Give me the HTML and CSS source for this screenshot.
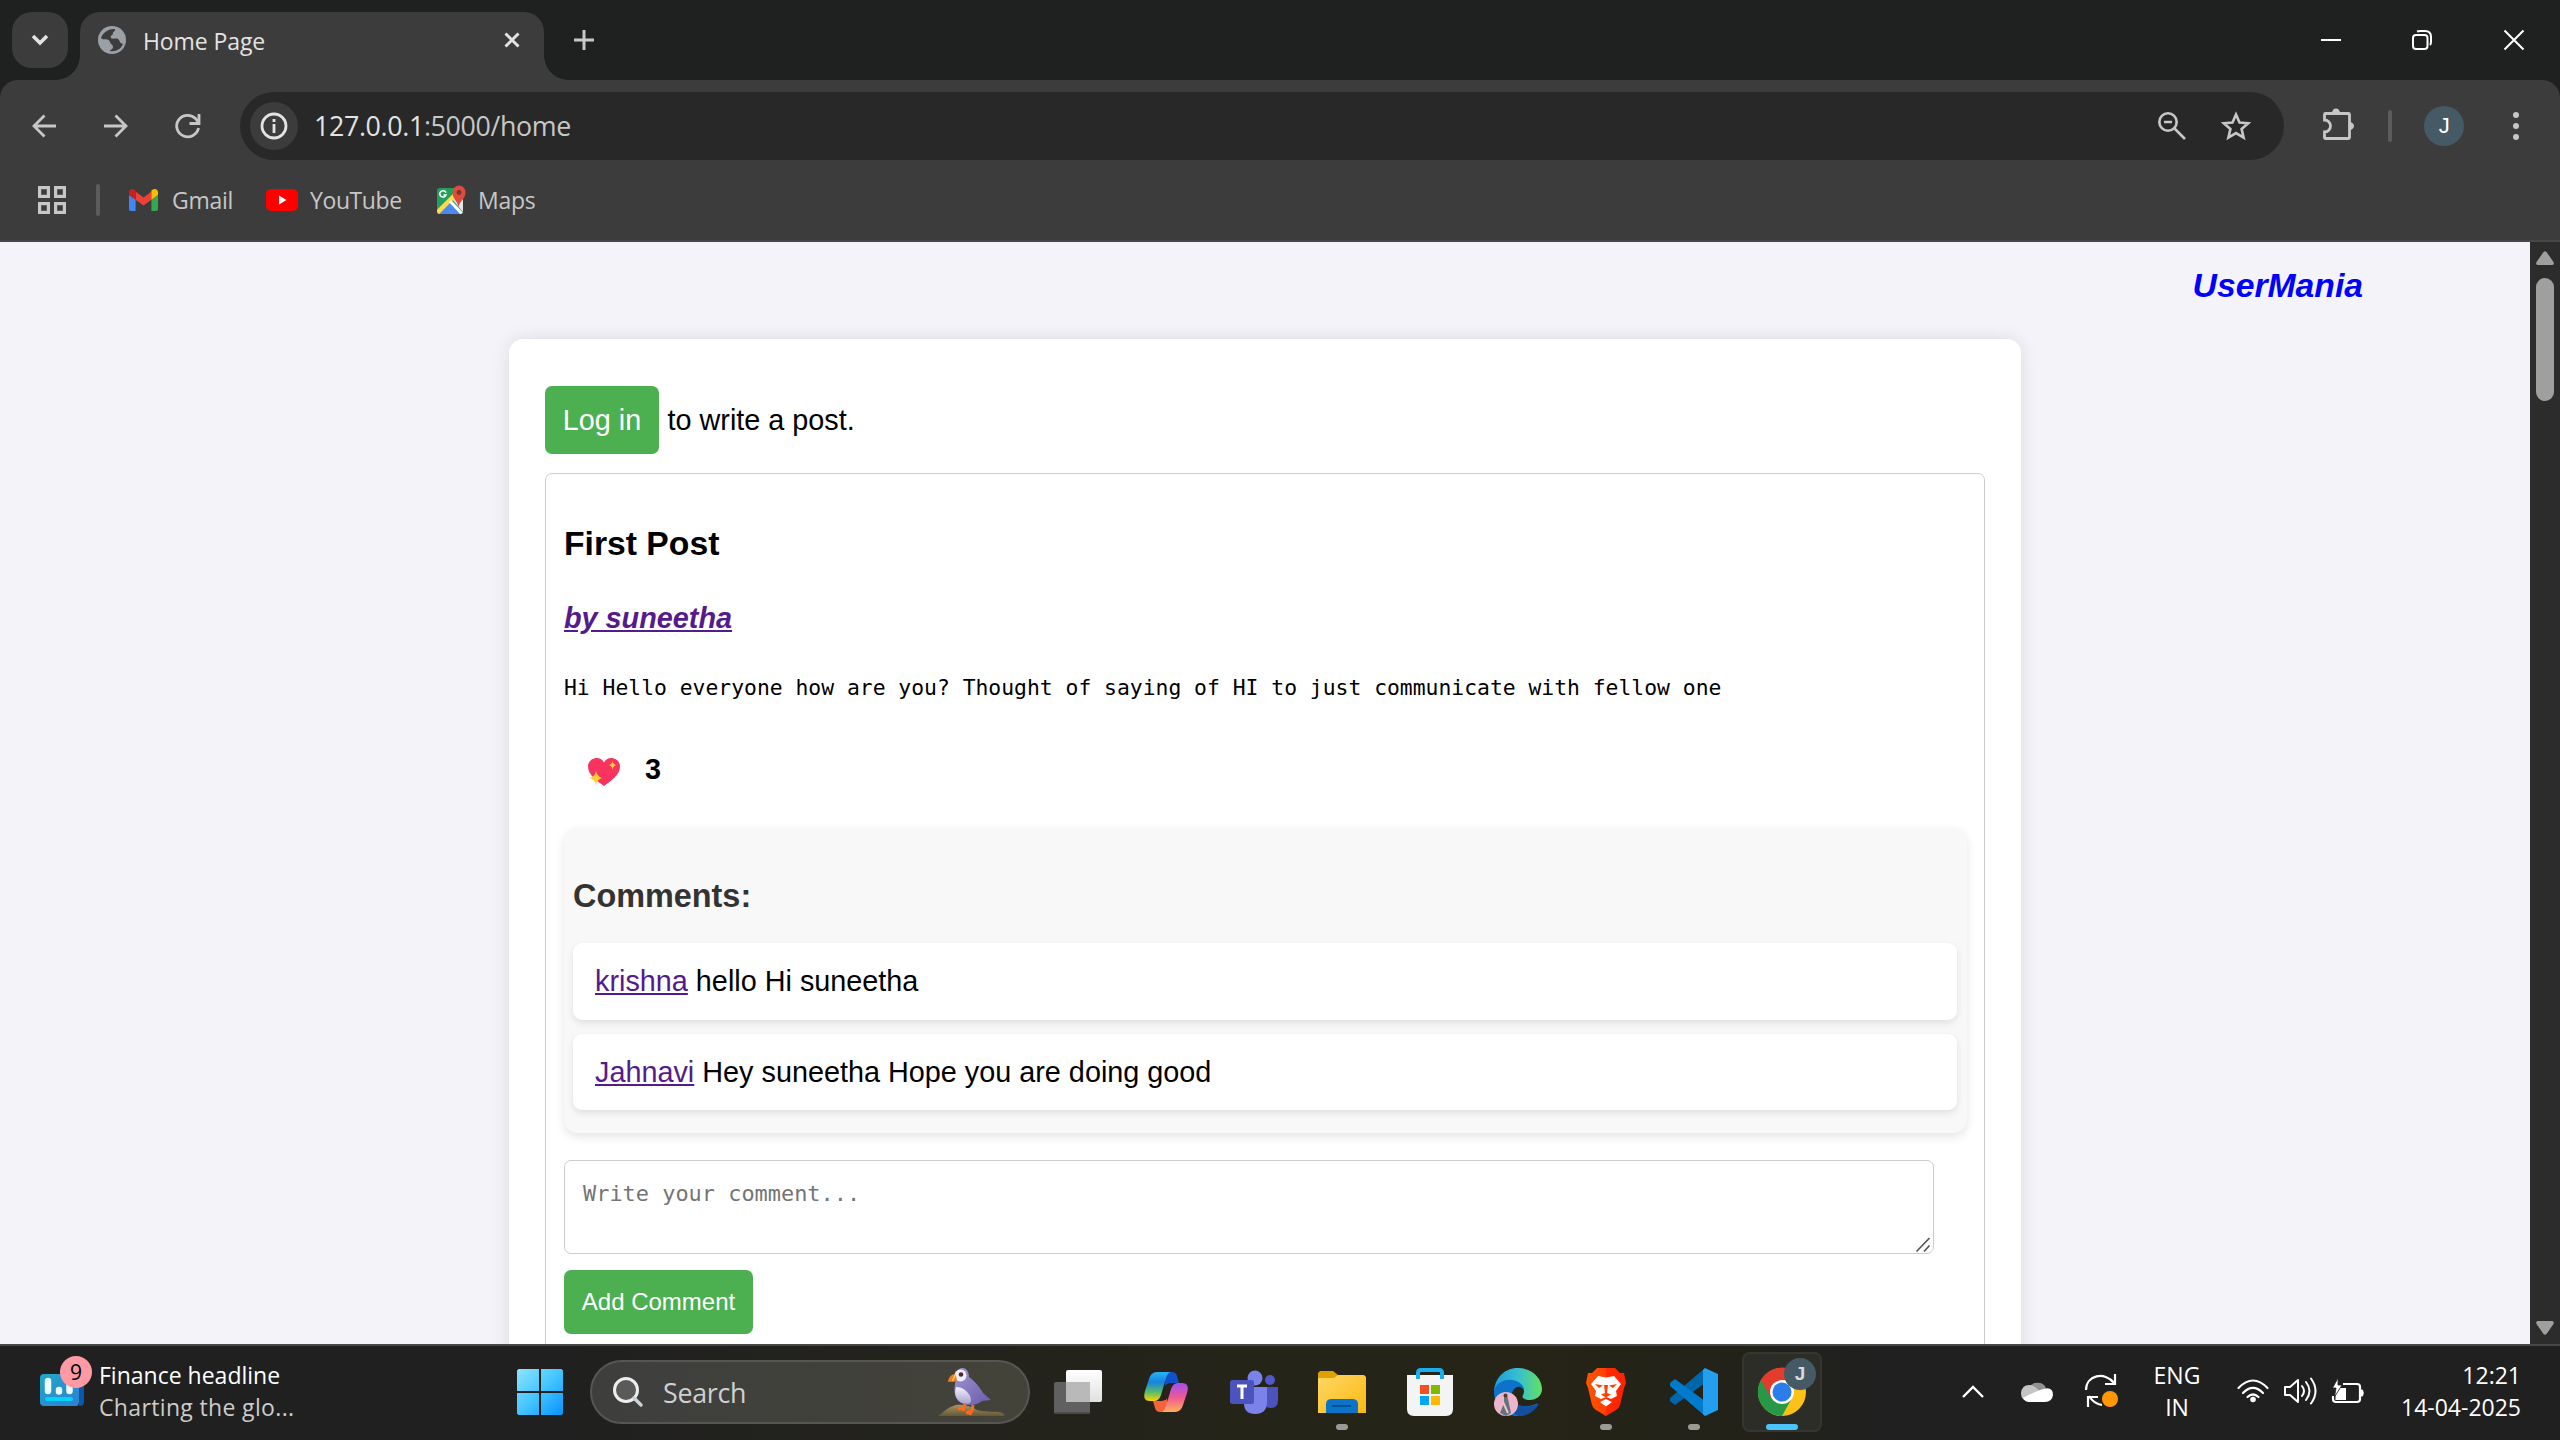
FILE: index.html
```html
<!DOCTYPE html>
<html lang="en">
<head>
<meta charset="utf-8">
<title>Home Page</title>
<link rel="stylesheet" href="styles.css">
</head>
<body>
<div class="screen">
  <header class="tabstrip">
    <button class="tab-search" aria-label="Search tabs"><svg width="20" height="16" viewBox="0 0 20 16"><path d="M3 4l7 7 7-7" fill="none" stroke="#e3e3e3" stroke-width="3.6"/></svg></button>
    <div class="tab">
      <svg class="favicon" width="28" height="28" viewBox="0 0 28 28"><circle cx="14" cy="14" r="14" fill="#9aa0a6"/><path d="M17 3c-6-.5-12 3-14 9 2 3 8-.5 9 4 0 2 3 2 3 5s-3 2-3 4c6 1 11-2 13-7-3-1-3-2-4-4-2-3-6 0-8-2-1-2 1-3 2-4-1-2 3-3 2-5z" fill="#3c3c3c"/></svg>
      <span class="tab-title">Home Page</span>
      <svg class="tab-close" width="16" height="16" viewBox="0 0 16 16"><path d="M1.500 1.500l13 13M14.500 1.500l-13 13" stroke="#e3e3e3" stroke-width="3"/></svg>
    </div>
    <svg class="new-tab" width="20" height="20" viewBox="0 0 20 20"><path d="M10 0v20M0 10h20" stroke="#c7c7c7" stroke-width="3"/></svg>
    <div class="window-controls">
      <svg width="20" height="20" viewBox="0 0 20 20"><path d="M0 10h20" stroke="#fff" stroke-width="2"/></svg>
      <svg width="20" height="20" viewBox="0 0 20 20"><g fill="none" stroke="#fff" stroke-width="2"><rect x="1" y="5" width="14.500" height="14" rx="3"/><path d="M5 1.500Q6 1 8 1h5q6 0 6 6v5q0 2-1 3"/></g></svg>
      <svg width="20" height="20" viewBox="0 0 20 20"><path d="M.5.5l19 19M19.500.5l-19 19" stroke="#fff" stroke-width="2"/></svg>
    </div>
  </header>

  <div class="toolbar">
    <nav class="nav">
      <svg width="24" height="24" viewBox="0 0 24 24"><path d="M24 12H2M12.500 1.500L2 12l10.500 10.500" fill="none" stroke="#c7c7c7" stroke-width="2.800"/></svg>
      <svg width="24" height="24" viewBox="0 0 24 24"><path d="M0 12h22M11.500 1.500L22 12 11.500 22.500" fill="none" stroke="#c7c7c7" stroke-width="2.800"/></svg>
      <svg width="26" height="24" viewBox="0 0 26 24"><path d="M23.500 14A11 10.700 0 1 1 20.500 4.500L23.500 8" fill="none" stroke="#c7c7c7" stroke-width="2.800"/><path d="M24 0v9.500h-9.500" fill="none" stroke="#c7c7c7" stroke-width="2.800"/></svg>
    </nav>
    <div class="omnibox">
      <span class="site-info"><svg width="28" height="28" viewBox="0 0 28 28"><circle cx="14" cy="14" r="12" fill="none" stroke="#e3e3e3" stroke-width="2.800"/><path d="M14 12v9M14 7v3" stroke="#e3e3e3" stroke-width="2.800"/></svg></span>
      <span class="url">127.0.0.1<span class="url-rest">:5000/home</span></span>
      <svg class="zoom-icon" width="28" height="28" viewBox="0 0 28 28"><g fill="none" stroke="#c7c7c7" stroke-width="2.600"><circle cx="10" cy="10" r="8.700"/><path d="M6 10h8M16 16l11 11"/></g></svg>
      <svg class="star" width="32" height="30" viewBox="0 0 32 30"><path d="M16 3.500l3.500 8 8.700.8-6.600 5.700 2 8.600-7.600-4.500-7.600 4.500 2-8.600-6.600-5.700 8.700-.8z" fill="none" stroke="#c7c7c7" stroke-width="2.600"/></svg>
    </div>
    <svg class="extensions" width="32" height="32" viewBox="0 0 32 32"><path d="M3.500 5.500h23q1 0 1 1v23q0 1-1 1h-23q-1 0-1-1v-5.500a6 6 0 0 0 0-12v-5.500q0-1 1-1z" fill="none" stroke="#c7c7c7" stroke-width="2.800"/><path d="M10 5a4 4.500 0 0 1 8 0zM27.500 14a4.500 4 0 0 1 0 8z" fill="#c7c7c7"/></svg>
    <span class="divider"></span>
    <span class="profile">J</span>
    <svg class="menu-dots" width="8" height="28" viewBox="0 0 8 28" fill="#c7c7c7"><circle cx="4" cy="3" r="3"/><circle cx="4" cy="14" r="3"/><circle cx="4" cy="25" r="3"/></svg>
  </div>

  <div class="bookmarks">
    <svg width="28" height="28" viewBox="0 0 28 28"><g fill="none" stroke="#c7c7c7" stroke-width="3.200"><rect x="1.600" y="1.600" width="8.800" height="8.800"/><rect x="17.600" y="1.600" width="8.800" height="8.800"/><rect x="1.600" y="17.600" width="8.800" height="8.800"/><rect x="17.600" y="17.600" width="8.800" height="8.800"/></g></svg>
    <span class="divider bookmarks-divider"></span>
    <svg width="29" height="22" viewBox="0 0 29 22"><path d="M0 6l6.600 4.500V22H2q-2 0-2-2z" fill="#4285f4"/><path d="M29 6l-6.600 4.500V22H27q2 0 2-2z" fill="#34a853"/><path d="M6.600 2.500l7.900 6 7.900-6v8.200l-7.900 5.800-7.900-5.800z" fill="#ea4335"/><path d="M0 6V3.200C0 .2 3.300-1 5.500.8l1.100.8v9.100L0 6z" fill="#c5221f"/><path d="M29 6V3.200C29 .2 25.700-1 23.500.8l-1.100.8v9.100L29 6z" fill="#fbbc04"/></svg>
    <span class="bm-text bm-gmail">Gmail</span>
    <svg width="32" height="22" viewBox="0 0 32 22"><rect width="32" height="22" rx="5" fill="#f00"/><path d="M13 6.500v9l7.500-4.500z" fill="#fff"/></svg>
    <span class="bm-text bm-youtube">YouTube</span>
    <svg class="maps-icon" width="29" height="29" viewBox="0 0 29 29"><clipPath id="mapclip"><rect y="2" width="26" height="26" rx="3"/></clipPath><g clip-path="url(#mapclip)"><rect width="26" height="28" fill="#1fa15d"/><path d="M0 28L13 15l13 13z" fill="#4a89f3"/><path d="M15 13l11 13V8z" fill="#e6e6e6"/><path d="M-1 28L22 5" stroke="#ffd84d" stroke-width="4.500"/><path d="M13 15l13 14" stroke="#fff" stroke-width="3"/></g><path d="M21.500 21c-1-6-6-8-6-14.500a6 6.500 0 0 1 13 0c0 6.500-6 8.500-7 14.500z" fill="#dd4b3e"/><circle cx="22" cy="6.500" r="2.400" fill="#822f2b"/><path d="M9 6.800A3.200 3.200 0 1 0 9 9H6.500" fill="none" stroke="#fff" stroke-width="1.500"/></svg>
    <span class="bm-text bm-maps">Maps</span>
  </div>

  <div class="viewport">
    <main class="page">
      <div class="brand">UserMania</div>
      <section class="container">
        <div class="login-row"><a class="login">Log in</a><span>to write a post.</span></div>
        <article class="post">
          <h3 class="post-title">First Post</h3>
          <a class="author">by suneetha</a>
          <pre class="post-body">Hi Hello everyone how are you? Thought of saying of HI to just communicate with fellow one</pre>
          <div class="likes">
            <svg width="32" height="28" viewBox="0 0 32 28"><path d="M16 28C9 23 0 17 0 8.500 0 0 12-3.500 16 4.500 20-3.500 32 0 32 8.500 32 17 23 23 16 28z" fill="#f8335f"/><path d="M8 12.500q1 6 6 7.500-5 1.500-6 7-1-5.500-6.500-7 5.500-1.500 6.500-7zM24.500 3q.6 3.400 3.500 4.200-2.900.8-3.500 4.200-.6-3.400-3.500-4.200 2.900-.8 3.500-4.200z" fill="#ffd02f"/></svg>
            <b>3</b>
          </div>
          <div class="comments">
            <h4 class="comments-title">Comments:</h4>
            <div class="comment"><a>krishna</a> hello Hi suneetha</div>
            <div class="comment comment-last"><a>Jahnavi</a> Hey suneetha Hope you are doing good</div>
          </div>
          <div class="comment-box"><span>Write your comment...</span><svg width="15" height="15" viewBox="0 0 15 15"><path d="M.5 14.500l13-13.500M8 14.500l5.500-6" stroke="#555" stroke-width="1.700"/></svg></div>
          <button class="add-comment">Add Comment</button>
        </article>
      </section>
    </main>
    <div class="scrollbar">
      <svg width="18" height="14" viewBox="0 0 18 14"><path d="M7.500 1Q9-.5 10.500 1L17.500 11q1 3-1.500 3H2q-2.500 0-1.500-3z" fill="#9f9f9f"/></svg>
      <span class="thumb"></span>
      <svg class="scroll-down" width="18" height="14" viewBox="0 0 18 14"><path d="M7.500 13Q9 14.500 10.500 13L17.500 3q1-3-1.500-3H2Q-.5 0 .5 3z" fill="#9f9f9f"/></svg>
    </div>
  </div>

  <footer class="taskbar">
    <div class="widget">
      <div class="widget-icon">
        <svg width="44" height="32" viewBox="0 0 44 32"><defs><linearGradient id="wg" x2="1" y2="1"><stop stop-color="#20a8c8"/><stop offset="1" stop-color="#2e7fd2"/></linearGradient></defs><rect x="24" width="20" height="32" rx="4" fill="#0b57a8"/><path d="M38 0h1v32h-1z" fill="#07264f"/><rect width="39" height="32" rx="4" fill="url(#wg)"/><path d="M8 7v10M19 16v1.500M29.500 7v10" stroke="#eafaff" stroke-width="6.500" stroke-linecap="round"/><rect x="5" y="23" width="28" height="4" rx="2" fill="#00d5f7"/></svg>
        <span class="badge">9</span>
      </div>
      <div class="widget-text"><span class="w1">Finance headline</span><span class="w2">Charting the glo...</span></div>
    </div>
    <div class="apps">
      <span class="slot"><svg width="46" height="46" viewBox="0 0 46 46"><defs><linearGradient id="win" x2="1" y2="1"><stop stop-color="#8de4ff"/><stop offset=".5" stop-color="#45c5ff"/><stop offset="1" stop-color="#0693ff"/></linearGradient></defs><path d="M1.500 0H22v22H0V1.500zM24 0h20.500L46 1.500V22H24zM0 24h22v22H1.500L0 44.500zM24 24h22v20.500L44.500 46H24z" fill="url(#win)"/></svg></span>
      <div class="search">
        <svg class="lens" width="30" height="30" viewBox="0 0 30 30"><circle cx="13" cy="13" r="11.500" fill="#5a5a5a" stroke="#eee" stroke-width="3"/><path d="M21 21l7 7" stroke="#ccd2d8" stroke-width="3.500" stroke-linecap="round"/></svg>
        <span class="search-text">Search</span>
        <svg class="bird" width="68" height="48" viewBox="0 0 68 48"><defs><linearGradient id="rock" x2="0" y2="1"><stop stop-color="#aa9468"/><stop offset="1" stop-color="#675735"/></linearGradient><linearGradient id="wing" x2="1" y2="1"><stop stop-color="#a296cf"/><stop offset="1" stop-color="#695bab"/></linearGradient><linearGradient id="belly" x2="0" y2="1"><stop stop-color="#f2f2fa"/><stop offset="1" stop-color="#a7a2cf"/></linearGradient></defs><path d="M0 48c5-3 8-8 18-11 8-1 15 1 21 5 8 3 23 0 27 4 1 1 0 2-1 2z" fill="url(#rock)"/><path d="M18 10C16-2 31-4 31 9c7 5 11 11 14 16l8 7-9 1c-5 4-12 5-18 3-8-2-11-10-9-20z" fill="url(#wing)"/><path d="M18 19c7 0 12 5 14 9 2 5 1 8-4 8-8-1-13-8-10-17z" fill="url(#belly)"/><ellipse cx="22.500" cy="7.500" rx="6" ry="6" fill="#eeeef8"/><circle cx="23" cy="6.500" r="2.300" fill="#512338"/><path d="M17.500 6c-4 0-7 3-7.500 8 3-1 7 1 9-2z" fill="#f47a24"/><path d="M17.500 6l-3 7" stroke="#ffd04e" stroke-width="1.500"/><path d="M27 35l-1 5-6 1M25 40l1 3M35 37l-1 6-6 2M33 43l-1 4" fill="none" stroke="#ff6a1d" stroke-width="3"/></svg>
      </div>
      <span class="slot"><svg width="48" height="44" viewBox="0 0 48 44"><defs><linearGradient id="tv" x2="0" y2="1"><stop stop-color="#fff"/><stop offset="1" stop-color="#e0e0e0"/></linearGradient></defs><rect x="12" width="36" height="32" rx="2" fill="url(#tv)"/><rect y="12" width="36" height="32" rx="2" fill="#606060"/><path d="M1 42h34v2H1z" fill="#484848"/><path d="M12 12h24v20H12z" fill="#b9b9b9"/></svg></span>
      <span class="slot"><svg width="44" height="40" viewBox="0 0 44 40"><defs><linearGradient id="c1" x2="0" y2="1"><stop stop-color="#26b5f6"/><stop offset=".35" stop-color="#1683df"/><stop offset=".7" stop-color="#5cbb68"/><stop offset="1" stop-color="#ffd400"/></linearGradient><linearGradient id="c2" x2="0" y2="1"><stop stop-color="#a34df0"/><stop offset=".5" stop-color="#ee5a94"/><stop offset="1" stop-color="#ffb057"/></linearGradient></defs><path d="M20 0h8q4 0 5 4l2 7h-8q-4 0-6 3z" fill="#134fc8"/><path d="M24 40h-8q-4 0-5-4l-2-7h8q4 0 6-3z" fill="#f4633c"/><path d="M13 0h14q-3 0-5 6l-5 17q-2 6-7 6H6q-8 0-5-10L5 7q2-7 8-7z" fill="url(#c1)"/><path d="M31 40H17q3 0 5-6l5-17q2-6 7-6h4q8 0 5 10l-4 12q-2 7-8 7z" fill="url(#c2)"/><path d="M22 13h4.500L22 28h-4.500z" fill="#26251a"/></svg></span>
      <span class="slot"><svg width="48" height="44" viewBox="0 0 48 44"><circle cx="25" cy="8" r="7.500" fill="#7b83eb"/><circle cx="40" cy="10" r="5" fill="#5059c9"/><path d="M36 17h12v13q0 8-7 8-5 0-7-3z" fill="#4b53bc"/><path d="M14 17h23v15q0 12-12 12-11 0-11-11z" fill="#7b83eb"/><rect y="10" width="24" height="24" rx="2.500" fill="#4b53bc"/><path d="M7 16h10M12 16v13" stroke="#fff" stroke-width="3"/></svg></span>
      <span class="slot running"><svg width="48" height="42" viewBox="0 0 48 42"><defs><linearGradient id="fo" x2="1" y2="1"><stop stop-color="#ffd765"/><stop offset="1" stop-color="#fbb812"/></linearGradient></defs><path d="M2 0h13l5 4v7H0V2z" fill="#e0a100"/><path d="M0 7h16l4-3h26l2 2v36H0z" fill="url(#fo)"/><path d="M8 42V33q0-5 6-5h20q6 0 6 5v9z" fill="#0b74c9"/><path d="M14 35h19" stroke="#07509a" stroke-width="2"/></svg></span>
      <span class="slot"><svg width="46" height="48" viewBox="0 0 46 48"><path d="M0 7h46v34q0 7-7 7H7q-7 0-7-7z" fill="#f4f4f4"/><path d="M11 11V5q0-3 3-3h18q3 0 3 3v6" fill="none" stroke="#1aaef0" stroke-width="4"/><path fill="#f25022" d="M13 17h9v9h-9z"/><path fill="#7fba00" d="M24 17h9v9h-9z"/><path fill="#00a4ef" d="M13 28h9v9h-9z"/><path fill="#ffb900" d="M24 28h9v9h-9z"/></svg></span>
      <span class="slot"><svg width="48" height="48" viewBox="0 0 48 48"><defs><linearGradient id="e1"><stop stop-color="#1f9bdc"/><stop offset=".5" stop-color="#35bfd2"/><stop offset="1" stop-color="#64df62"/></linearGradient></defs><path d="M0 24C1 7 13 0 24 0c15 0 24 11 24 21 0 7-6 11-12 11-5 0-9-2-7-5 3-5-1-13-10-13C9 14 1 20 0 24z" fill="url(#e1)"/><path d="M0 24c1-8 9-13 18-12 7 1 12 5 12 10-5-7-12-2-12 5 0 12 14 14 26 8-5 9-12 13-20 13C10 48 0 38 0 24z" fill="#0c73ca"/><path d="M18 26c0 13 15 15 27 10-5 8-12 12-20 12-9-3-14-14-7-22z" fill="#124f9f"/><circle cx="12" cy="36" r="12" fill="#ecb5cb"/><path d="M10 28q3-3 4 3l3 14-5 3-6-3 4-10z" fill="#66717e"/><circle cx="11.500" cy="27.500" r="2" fill="#4a3a38"/><path d="M9 34l5 11" stroke="#e8c9bd" stroke-width="2"/></svg></span>
      <span class="slot running"><svg width="40" height="48" viewBox="0 0 40 48"><defs><linearGradient id="br"><stop stop-color="#ff5500"/><stop offset=".5" stop-color="#ff4000"/><stop offset=".51" stop-color="#ff2a00"/><stop offset="1" stop-color="#ff2200"/></linearGradient></defs><path d="M11 0h18l5 5h4l2 10-2 5-4 17q-1 3-4 5l-10 6-10-6q-3-2-4-5L2 20 0 15 2 5h4z" fill="url(#br)"/><path d="M12 8l8 1.500L28 8l7 8-5 7 1 5-6 3-5-2-5 2-6-3 1-5-5-7zM20 31l6 3-6 4.500-6-4.500z" fill="#fff"/><path d="M9 16l8 1.500-4 2.500zM31 16l-8 1.500 4 2.500zM18 17l1 8-4 1.500 5 3 5-3-4-1.500 1-8z" fill="#ff4000"/></svg></span>
      <span class="slot running"><svg width="48" height="48" viewBox="0 0 48 48"><path d="M35 0v15L5 37l-5-4v-3z" fill="#0065a9"/><path d="M35 48V33L5 11l-5 4v3z" fill="#007acc"/><path d="M35 0l13 6v36l-13 6-2-2V2z" fill="#249ff0"/></svg></span>
      <span class="slot running active"><svg width="48" height="48" viewBox="0 0 48 48"><circle cx="24" cy="24" r="24" fill="#fbc116"/><path d="M3 12a24 24 0 0 0 21 36l10-18-10-6z" fill="#279847"/><path d="M3 12a24 24 0 0 1 42 0H24L13 30z" fill="#e33b2e"/><circle cx="24" cy="24" r="12" fill="#fff"/><circle cx="24" cy="24" r="9.500" fill="#2b7de9"/></svg><span class="app-badge">J</span></span>
    </div>
    <div class="tray">
      <svg class="t-chevron" width="22" height="13" viewBox="0 0 22 13"><path d="M1 12L11 2l10 10" fill="none" stroke="#fff" stroke-width="2.400"/></svg>
      <svg class="t-cloud" width="32" height="22" viewBox="0 0 32 22"><path d="M8 8a9 8 0 0 1 17 0l-8 6z" fill="#929292"/><path d="M8 21q-8 0-8-8 1-8 8-8 6 0 11 7z" fill="#c4c4c4"/><path d="M2 18q7-4 17-8 13-5 13 5-1 7-8 7H8q-4 0-6-4z" fill="#fff"/></svg>
      <svg class="t-sync" width="34" height="34" viewBox="0 0 34 34"><g fill="none" stroke="#fff" stroke-width="2.200"><path d="M1 16C1 1 20-3 29 9M30 0v10H20M17 31q-8-1-13-9M3 33V23h10"/></g><circle cx="25" cy="25" r="8" fill="#ff9800"/></svg>
      <div class="lang"><span>ENG</span><span>IN</span></div>
      <svg class="t-wifi" width="32" height="24" viewBox="0 0 32 24"><g fill="none" stroke="#fff" stroke-width="2.200" stroke-linecap="round"><path d="M1.500 9q14.500-15 29 0M6 14q10-10 20 0M10.500 18q5.500-5 11 0"/></g><circle cx="16" cy="20.500" r="2.800" fill="#fff"/></svg>
      <svg class="t-sound" width="33" height="28" viewBox="0 0 33 28"><g fill="none" stroke="#fff" stroke-width="2" stroke-linecap="round" stroke-linejoin="round"><path d="M1 10h5l8-7v22l-8-7H1zM18 9q4 5 0 10M22 5q7 9 0 18M27 1.500q9 12.500 0 25"/></g></svg>
      <svg class="t-battery" width="32" height="26" viewBox="0 0 32 26"><path d="M11 6h14q3 0 3 3v12q0 3-3 3H4q-3 0-3-3v-3" fill="none" stroke="#fff" stroke-width="2.200"/><path d="M29 12h1.500q1.500 3 0 6H29z" fill="#fff" stroke="#fff"/><path d="M8 10h6v12H3.500v-5z" fill="#fff"/><path d="M6 0L.5 10H4l-1.500 9L10 7H6z" fill="#fff" stroke="#202020" stroke-width=".8"/></svg>
      <div class="clock"><span>12:21</span><span>14-04-2025</span></div>
    </div>
  </footer>
</div>
</body>
</html>
```
FILE: styles.css
```css
* { box-sizing: border-box; }
body { margin: 0; }
svg { display: block; flex: none; overflow: visible; }
button { border: 0; padding: 0; }

.screen {
  display: flex;
  flex-direction: column;
  width: 2560px;
  height: 1440px;
  overflow: hidden;
  background: #1f2120;
  font-family: "Open Sans", "Noto Sans", sans-serif;
  font-size: 23px;
  letter-spacing: -0.25px;
  white-space: nowrap;
}

/* Tab strip */
.tabstrip {
  display: flex;
  height: 80px;
  padding: 12px 36px 0 12px;
}
.tab-search {
  display: flex;
  align-items: center;
  justify-content: center;
  width: 56px;
  height: 56px;
  border-radius: 20px;
  background: #3c3c3c;
}
.tab {
  position: relative;
  display: flex;
  align-items: center;
  width: 464px;
  height: 68px;
  margin-left: 12px;
  padding: 0 24px 12px 18px;
  border-radius: 20px 20px 0 0;
  background: #3c3c3c;
  color: #e3e3e3;
}
.tab::before, .tab::after {
  content: "";
  position: absolute;
  bottom: 0;
  width: 24px;
  height: 24px;
}
.tab::before { left: -24px; background: radial-gradient(circle at 0 0, transparent 23.5px, #3c3c3c 24px); }
.tab::after { right: -24px; background: radial-gradient(circle at 100% 0, transparent 23.5px, #3c3c3c 24px); }
.tab-title { margin-left: 17px; padding-top: 2px; letter-spacing: -0.1px; }
.tab-close { margin-left: auto; }
.new-tab { margin: 18px 0 0 30px; }
.window-controls { display: flex; gap: 71.5px; margin: 18px 0 0 auto; }
.window-controls svg:nth-child(2) { margin: 0 0.5px 0 -0.5px; }

/* Toolbar */
.toolbar {
  display: flex;
  align-items: center;
  height: 92px;
  padding: 0 40px 0 32px;
  border-radius: 18px 18px 0 0;
  background: #3c3c3c;
}
.nav { display: flex; gap: 48px; width: 208px; }
.nav svg:last-child { margin-left: -1px; }
.omnibox {
  display: flex;
  align-items: center;
  width: 2044px;
  height: 68px;
  padding: 0 32px 0 10px;
  border-radius: 34px;
  background: #282828;
}
.site-info {
  display: flex;
  align-items: center;
  justify-content: center;
  width: 48px;
  height: 48px;
  border-radius: 50%;
  background: #3c3c3c;
}
.url { margin-left: 16px; padding-bottom: 1px; color: #e3e3e3; font-size: 26.8px; letter-spacing: -0.35px; }
.url-rest { color: #c7c7c7; }
.zoom-icon { margin-left: auto; }
.star { margin-left: 34px; }
.extensions { margin: 0 34px 4px 38px; }
.divider { width: 4px; height: 32px; border-radius: 2px; background: #5c5c5c; }
.profile {
  display: flex;
  align-items: center;
  justify-content: center;
  width: 40px;
  height: 40px;
  margin-left: 32px;
  border-radius: 50%;
  background: #455a64;
  color: #fff;
  font-family: "Liberation Sans", Arial, sans-serif;
  font-size: 22px;
}
.menu-dots { margin-left: 48px; }

/* Bookmarks bar */
.bookmarks {
  display: flex;
  align-items: center;
  height: 70px;
  padding: 0 38px 12px;
  border-bottom: 2px solid #474747;
  background: #3c3c3c;
  color: #c7c7c7;
}
.bookmarks-divider { margin: 0 29px 0 30px; }
.bm-gmail { width: 94px; padding-left: 14px; margin-right: 14px; }
.bm-youtube { width: 139px; padding-left: 12px; letter-spacing: -0.4px; }
.bm-maps { padding-left: 12px; }

/* Page */
.viewport { display: flex; height: 1102px; }
.page {
  width: 2530px;
  overflow: hidden;
  background: #f4f3f9;
  color: #000;
  font-family: "Liberation Sans", Arial, sans-serif;
  font-size: 28.8px;
  line-height: 33px;
  letter-spacing: 0;
}
.brand {
  height: 97px;
  padding: 24px 167px 0 0;
  color: #0000ff;
  font-size: 33.7px;
  font-style: italic;
  font-weight: bold;
  line-height: 38px;
  text-align: right;
}
.container {
  width: 1512px;
  height: 1200px;
  margin: 0 auto 0 509px;
  padding: 47px 36px;
  border-radius: 14px;
  background: #fff;
  box-shadow: 0 0 18px rgba(0, 0, 0, 0.1);
}
.login-row { display: flex; align-items: center; gap: 8.500px; }
.login {
  width: 114px;
  height: 68px;
  border-radius: 7px;
  background: #4caf50;
  color: #fff;
  line-height: 68px;
  text-align: center;
}
.post {
  display: flex;
  flex-direction: column;
  height: 1100px;
  margin-top: 19px;
  padding: 50px 18px;
  border: 1px solid #ccc;
  border-radius: 7px;
}
.post-title { margin: 0; font-size: 33.7px; line-height: 39px; }
.author {
  align-self: flex-start;
  margin-top: 39px;
  color: #551a8b;
  font-style: italic;
  font-weight: bold;
  text-decoration: underline;
}
.post-body {
  margin: 39px 0 38px;
  font-family: "DejaVu Sans Mono", monospace;
  font-size: 21.37px;
  line-height: 27px;
}
.likes { display: flex; align-items: center; gap: 25px; height: 60px; padding-left: 24px; }
.likes svg { margin-top: 6px; }
.comments {
  width: 1403px;
  height: 306px;
  margin-top: 28px;
  padding: 51px 10px 0 9px;
  border-radius: 14px;
  background: #f8f8f8;
  box-shadow: 0 4px 10px rgba(0, 0, 0, 0.1);
}
.comments-title { margin: 0 0 28px; color: #333; font-size: 32.4px; line-height: 37px; }
.comment {
  height: 77px;
  padding: 22px;
  border-radius: 9px;
  background: #fff;
  box-shadow: 0 3px 7px rgba(0, 0, 0, 0.1);
}
.comment a { color: #551a8b; text-decoration: underline; }
.comment-last { height: 76px; margin-top: 14px; }
.comment-box {
  position: relative;
  width: 1370px;
  height: 94px;
  margin-top: 27px;
  padding: 19px 18px;
  border: 1px solid #ccc;
  border-radius: 7px;
  color: #757575;
  font-family: "DejaVu Sans Mono", monospace;
  font-size: 21.93px;
  line-height: 27px;
}
.comment-box svg { position: absolute; right: 2px; bottom: 1px; }
.add-comment {
  width: 189px;
  height: 64px;
  margin-top: 16px;
  flex: none;
  border-radius: 7px;
  background: #4caf50;
  color: #fff;
  font-family: "Liberation Sans", Arial, sans-serif;
  font-size: 24px;
}
.scrollbar {
  display: flex;
  flex-direction: column;
  align-items: center;
  width: 30px;
  padding: 9px 0;
  background: #2c2c2c;
}
.thumb { width: 18px; height: 123px; margin-top: 13px; border-radius: 9px; background: #9f9f9f; }
.scroll-down { margin-top: auto; }

/* Taskbar */
.taskbar {
  display: flex;
  height: 96px;
  border-top: 2px solid #474747;
  background: linear-gradient(90deg, #202020 22%, #25241a 47%, #262417 60%, #222219 68%, #202020 73%);
  color: #fff;
  letter-spacing: 0;
}
.widget { display: flex; width: 500px; padding-left: 40px; }
.widget-icon { position: relative; width: 44px; padding-top: 28px; }
.badge {
  position: absolute;
  top: 10px;
  left: 20px;
  width: 32px;
  height: 32px;
  border-radius: 50%;
  background: #ff99a4;
  color: #000;
  font-size: 21px;
  line-height: 32px;
  text-align: center;
}
.widget-text { display: flex; flex-direction: column; padding: 13px 0 0 15px; line-height: 32px; }
.w2 { letter-spacing: 0.35px; color: #ccc; }
.apps { display: flex; gap: 8px; align-items: center; }
.slot {
  position: relative;
  display: flex;
  align-items: center;
  justify-content: center;
  width: 80px;
  height: 80px;
  margin-top: -2px;
}
.running::after {
  content: "";
  position: absolute;
  bottom: 2px;
  left: 34px;
  width: 12px;
  height: 6px;
  border-radius: 3px;
  background: #9b9a94;
}
.active { border-radius: 8px; background: #2d2d27; box-shadow: inset 0 0 0 2px #363631; }
.active::after { left: 24px; width: 32px; background: #4cc2ff; }
.app-badge {
  position: absolute;
  top: 6px;
  right: 6px;
  width: 32px;
  height: 32px;
  border-radius: 50%;
  background: #455a64;
  color: #d5dade;
  font-family: "Liberation Sans", Arial, sans-serif;
  font-size: 19px;
  font-weight: bold;
  line-height: 32px;
  text-align: center;
}
.search {
  display: flex;
  align-items: center;
  width: 440px;
  height: 64px;
  margin: -2px 0 0 2px;
  padding: 0 22px 0 21px;
  border: 2px solid #565653;
  border-radius: 32px;
  background: linear-gradient(90deg, #3e3e3e, #434339);
  color: #d0d0d0;
}
.search-text { margin-left: 20px; font-size: 26.8px; letter-spacing: -0.3px; }
.bird { margin-left: auto; }
.tray { display: flex; align-items: center; margin-left: auto; padding: 0 39px 4px 0; }
.t-cloud { margin-left: 37px; }
.t-sync { margin-left: 32px; }
.lang { display: flex; flex-direction: column; width: 60px; margin-left: 28px; line-height: 32px; text-align: center; }
.t-wifi { margin-left: 30px; }
.t-sound { margin: 0 15px; }
.clock { display: flex; flex-direction: column; width: 157px; line-height: 32px; text-align: right; }
```
